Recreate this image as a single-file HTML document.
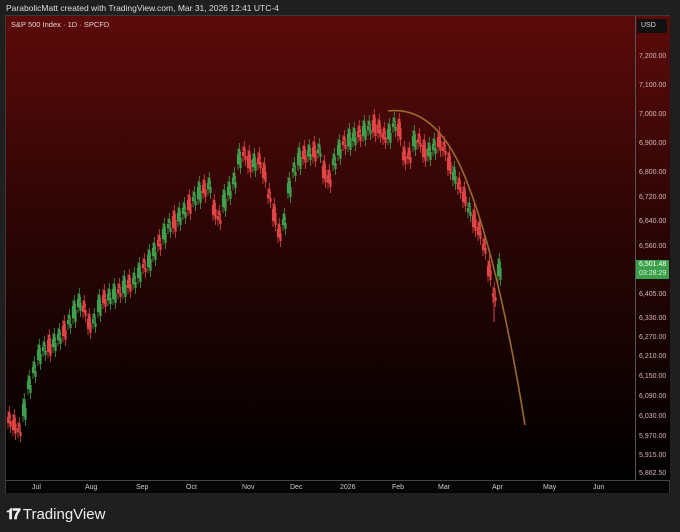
<!DOCTYPE html>
<html><head><meta charset="utf-8"><style>
body{margin:0;width:680px;height:532px;background:#1f1f1f;overflow:hidden;font-family:"Liberation Sans",sans-serif;position:relative}
.hdr{position:absolute;left:6px;top:3px;font-size:8.5px;color:#ddd}
.frame{position:absolute;left:5px;top:15px;width:665px;height:478px;border:1px solid #3a3a3a;box-sizing:border-box}
.chart{position:absolute;left:6px;top:16px;width:629px;height:464px;background:linear-gradient(#5c0a0a,#2c0505 45%,#000 100%)}
.axis{position:absolute;left:635px;top:16px;width:34px;height:464px;background:linear-gradient(#5c0a0a,#2c0505 45%,#000 100%);border-left:1px solid #555}
.tax{position:absolute;left:6px;top:480px;width:663px;height:12px;background:#050505;border-top:1px solid #444}
.lab{position:absolute;font-size:7px;color:#d8b8b8;left:639px}
.t{position:absolute;top:484px;font-size:7px;color:#ccc}
.title{position:absolute;left:11px;top:20px;font-size:7.5px;color:#e6cfcf}
.usd{position:absolute;left:637px;top:19px;width:30px;height:14px;background:#111;border-radius:2px;color:#ddd;font-size:7px;line-height:14px;padding-left:4px;box-sizing:border-box}
.price{position:absolute;left:636px;top:260px;width:33px;height:19px;background:#3aa14a;color:#fff;font-size:7px;line-height:9px;padding-left:3px;box-sizing:border-box}
.logo{position:absolute;left:6px;top:506px;font-size:15px;color:#eee;font-weight:bold}
</style></head><body>
<div class="hdr">ParabolicMatt created with TradingView.com, Mar 31, 2026 12:41 UTC-4</div>
<div class="frame"></div>
<div class="chart"></div>
<div class="axis"></div>
<div class="tax"></div>
<svg width="680" height="532" style="position:absolute;left:0;top:0">
<g id="cd">
<path fill="none" stroke="#3fa14e" stroke-width="2.2" d="M23 404V416M28 381V389M33 367V373M38 350V360M43 347V351M53 339V347M58 334V340M68 320V324M73 306V318M78 299V307M93 319V323M98 300V312M108 294V300M113 289V299M123 281V293M133 278V284M138 268V278M148 255V267M153 248V256M163 229V239M168 224V228M178 213V221M183 208V214M193 197V201M198 187V199M208 183V189M223 195V207M228 187V195M233 178V184M238 154V164M253 159V167M283 219V225M288 183V193M293 168V172M298 153V165M308 150V156M318 149V153M333 159V165M338 145V155M348 134V146M353 133V141M363 126V136M368 126V130M388 129V139M393 123V127M413 136V146M428 148V156M433 144V150M453 172V180M468 208V212M498 264V276"/>
<path fill="none" stroke="#3fa14e" stroke-width="0.8" d="M23 398V422M28 375V395M33 361V379M38 344V366M43 341V357M53 333V353M58 328V346M68 314V330M73 300V324M78 293V313M93 313V329M98 294V318M108 288V306M113 283V305M123 275V299M133 272V290M138 262V284M148 249V273M153 242V262M163 223V245M168 218V234M178 207V227M183 202V220M193 191V207M198 181V205M208 177V195M223 189V213M228 181V201M233 172V190M238 148V170M253 153V173M283 213V231M288 177V199M293 162V178M298 147V171M308 144V162M318 143V159M333 153V171M338 139V161M348 128V152M353 127V147M363 120V142M368 120V136M388 123V145M393 117V133M413 130V152M428 142V162M433 138V156M453 166V186M468 202V218M498 258V282"/>
<path fill="none" stroke="#e04545" stroke-width="2.2" d="M8 417V423M13 420V430M18 428V432M48 340V352M63 326V336M83 306V312M88 319V329M103 295V303M118 289V293M128 280V288M143 264V268M158 240V246M173 216V228M188 200V210M203 185V193M213 205V215M218 216V220M243 152V156M248 156V168M258 158V164M263 168V178M268 194V198M273 209V221M278 229V237M303 151V159M313 147V157M323 166V178M328 175V183M343 141V145M358 131V137M373 120V132M378 125V133M383 133V139M398 124V136M403 152V160M408 153V159M418 139V143M423 145V157M438 137V147M443 147V151M448 158V170M458 183V189M463 192V202M473 215V227M478 227V235M483 244V250M488 266V276M493 293V297"/>
<path fill="none" stroke="#e04545" stroke-width="0.8" d="M8 411V429M13 414V436M18 422V438M48 334V358M63 320V342M83 300V318M88 313V335M103 289V309M118 283V299M128 274V294M143 258V274M158 234V252M173 210V234M188 194V216M203 179V199M213 199V221M218 210V226M243 146V162M248 150V174M258 152V170M263 162V184M268 188V204M273 203V227M278 223V243M303 145V165M313 141V163M323 160V184M328 169V189M343 135V151M358 125V143M373 114V138M378 119V139M383 127V145M398 118V142M403 146V166M408 147V165M418 133V149M423 139V163M438 131V153M443 141V157M448 152V176M458 177V195M463 186V208M473 209V233M478 221V241M483 238V256M488 260V282M493 287V303"/>
</g>
<use href="#cd" transform="translate(2.5,4)"/>
<use href="#cd" transform="translate(1.3,-5)"/>
<path fill="none" stroke="#e04545" stroke-width="1" d="M494 295V322"/>
<path d="M388 111 Q 440 105 470 190 Q 500 270 525 425" fill="none" stroke="#9a6a30" stroke-width="1.6"/>
</svg>
<div class="title">S&amp;P 500 Index · 1D · SPCFD</div>
<div class="usd">USD</div>
<div class="lab" style="top:53px">7,200.00</div>
<div class="lab" style="top:82px">7,100.00</div>
<div class="lab" style="top:111px">7,000.00</div>
<div class="lab" style="top:140px">6,900.00</div>
<div class="lab" style="top:169px">6,800.00</div>
<div class="lab" style="top:194px">6,720.00</div>
<div class="lab" style="top:218px">6,640.00</div>
<div class="lab" style="top:243px">6,560.00</div>
<div class="price">6,501.48<br><span style="color:#d8f0d8">03:28:29</span></div>
<div class="lab" style="top:291px">6,405.00</div>
<div class="lab" style="top:315px">6,330.00</div>
<div class="lab" style="top:334px">6,270.00</div>
<div class="lab" style="top:353px">6,210.00</div>
<div class="lab" style="top:373px">6,150.00</div>
<div class="lab" style="top:393px">6,090.00</div>
<div class="lab" style="top:413px">6,030.00</div>
<div class="lab" style="top:433px">5,970.00</div>
<div class="lab" style="top:452px">5,915.00</div>
<div class="lab" style="top:470px">5,862.50</div>
<div class="t" style="left:32px">Jul</div><div class="t" style="left:85px">Aug</div><div class="t" style="left:136px">Sep</div><div class="t" style="left:186px">Oct</div><div class="t" style="left:242px">Nov</div><div class="t" style="left:290px">Dec</div><div class="t" style="left:340px">2026</div><div class="t" style="left:392px">Feb</div><div class="t" style="left:438px">Mar</div><div class="t" style="left:492px">Apr</div><div class="t" style="left:543px">May</div><div class="t" style="left:593px">Jun</div>
<div class="logo"><span style="letter-spacing:-2px">𝟏𝟕</span> <span style="font-weight:normal">TradingView</span></div>
</body></html>
